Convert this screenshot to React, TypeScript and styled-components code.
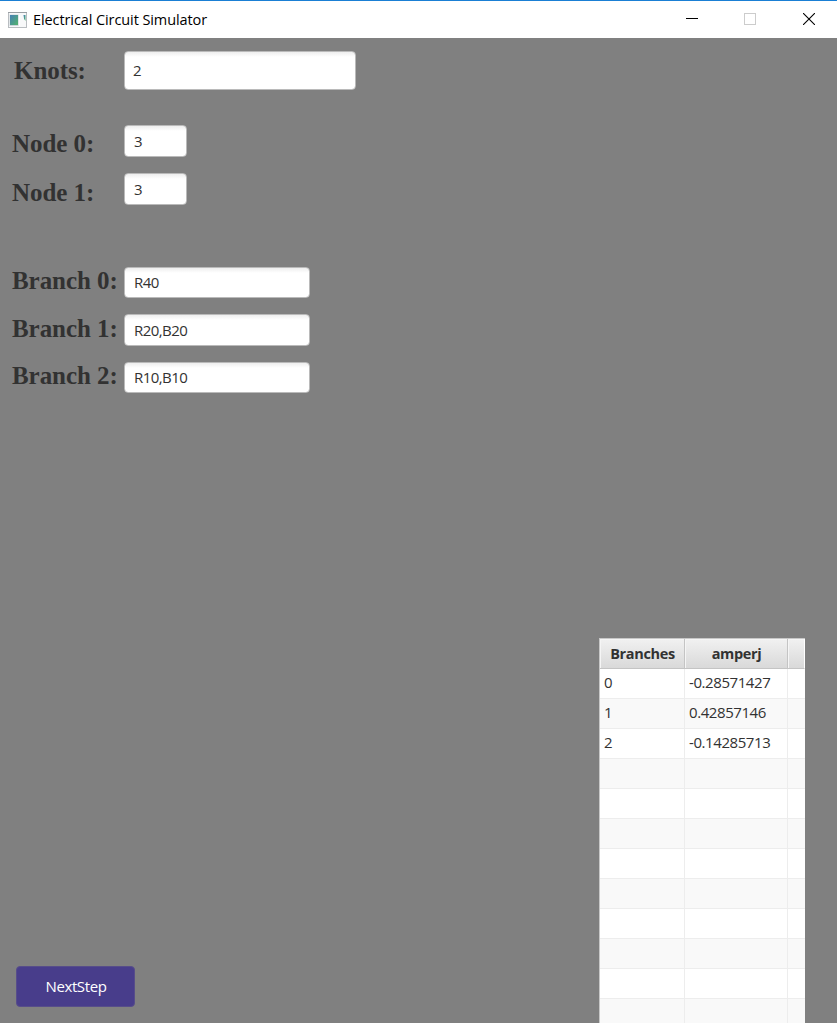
import React from "react";
import styled, { createGlobalStyle } from "styled-components";

const GlobalStyle = createGlobalStyle`
  *, *::before, *::after { box-sizing: border-box; }
  html, body { margin: 0; padding: 0; overflow: hidden; background: #808080; }
`;

const Window = styled.div`
  width: 837px;
  height: 1023px;
  display: flex;
  flex-direction: column;
  overflow: hidden;
  background: #808080;
  color: #323232;
  font-family: "Open Sans", "Noto Sans", sans-serif;
  font-size: 15px;
`;

const TitleBar = styled.header`
  flex: none;
  height: 38px;
  display: flex;
  align-items: center;
  padding-left: 8px;
  border-top: 1px solid #1a7fd4;
  background: #fff;
  color: #000;
`;

const Title = styled.span`
  flex: 1;
  margin-left: 6px;
  font-size: 14.5px;
  line-height: 20px;
  letter-spacing: -0.09px;
  white-space: nowrap;
`;

const Controls = styled.div`
  display: flex;
  margin-right: -1px;
  padding-bottom: 1px;
`;

const Control = styled.span`
  width: 58.5px;
  display: flex;
  justify-content: center;
  svg { display: block; }
`;

const Content = styled.main`
  flex: 1;
  min-height: 0;
  display: flex;
  justify-content: space-between;
  padding: 13px 32px 0 12px;
`;

const Side = styled.section`
  display: flex;
  flex-direction: column;
  justify-content: space-between;
  padding-bottom: 16px;
`;

const Group = styled.div<{ $gap: number }>`
  display: flex;
  flex-direction: column;
  gap: 16px;
  margin-bottom: ${(p) => p.$gap}px;
`;

const Row = styled.label<{ $h: number }>`
  display: flex;
  height: ${(p) => p.$h}px;
`;

const Label = styled.span<{ $inset?: number; $top: number }>`
  width: 112px;
  padding-left: ${(p) => p.$inset ?? 0}px;
  padding-top: ${(p) => p.$top}px;
  font: bold 25px/28px "Liberation Serif", "Times New Roman", serif;
  letter-spacing: -0.06px;
  white-space: nowrap;
`;

const Field = styled.input<{ $w: number; $pad: number; $lift?: number }>`
  width: ${(p) => p.$w}px;
  height: 100%;
  padding: 0 0 ${(p) => p.$lift ?? 0}px ${(p) => p.$pad}px;
  border: 1px solid #bababa;
  border-radius: 4px;
  outline: 0;
  background: linear-gradient(#eee 0, #fff 5px);
  color: #323232;
  font-family: inherit;
  font-size: 15px;
  letter-spacing: -0.55px;
`;

const NextButton = styled.button`
  width: 119px;
  height: 41px;
  margin-left: 4px;
  padding: 0 0 2px 1px;
  border: 1px solid #574d8a;
  border-radius: 4px;
  background: #483d8b;
  color: #fff;
  font-family: inherit;
  font-size: 15px;
  letter-spacing: -0.4px;
`;

const Table = styled.table`
  align-self: flex-start;
  width: 206px;
  margin-top: 587px;
  table-layout: fixed;
  border-collapse: separate;
  border-spacing: 0;
  border: solid #c8c8c8;
  border-width: 1px 0 0 1px;
  background: #fff;
`;

const HeadCell = styled.th`
  height: 30px;
  padding: 0 0 0 1px;
  border: solid #c4c4c4;
  border-width: 0 1px 1px 0;
  background: linear-gradient(#f1f1f1, #d9d9d9);
  box-shadow: inset 1px 1px 0 #f5f5f5;
  font-weight: bold;
  font-size: 14.5px;
  letter-spacing: -0.35px;
  &:last-child { border-right-color: #fff; }
`;

const BodyRow = styled.tr`
  background: #fff;
  &:nth-child(even) { background: #f9f9f9; }
`;

const Cell = styled.td`
  height: 30px;
  padding: 0 0 3px 4px;
  border: solid #ededed;
  border-width: 0 1px 1px 0;
  line-height: 20px;
  letter-spacing: -0.42px;
  &:last-child { border-right: 0; }
`;

const nodes = ["3", "3"];
const branches = ["R40", "R20,B20", "R10,B10"];
const currents = ["-0.28571427", "0.42857146", "-0.14285713"];

const AppIcon = () => (
  <svg width="19" height="16" viewBox="0 0 19 16">
    <defs>
      <linearGradient id="pane" x1="0" y1="0" x2="1" y2="1">
        <stop offset="0" stopColor="#4580b5" />
        <stop offset="1" stopColor="#52b36c" />
      </linearGradient>
    </defs>
    <rect x="0.5" y="0.5" width="18" height="15" fill="#f7f8f9" stroke="#b9bdc1" />
    <path d="M0 0.5H19" stroke="#9a9fa4" />
    <rect x="1.5" y="2.5" width="9" height="11.5" fill="#cdd6db" />
    <rect x="2" y="3" width="8" height="10" fill="url(#pane)" />
    <path d="M11.5 3V14" stroke="#fff" />
    <path d="M15.5 3H17.5V9Q15.5 7 15.5 3Z" fill="url(#pane)" />
  </svg>
);

export default function App() {
  return (
    <Window>
      <GlobalStyle />
      <TitleBar>
        <AppIcon />
        <Title>Electrical Circuit Simulator</Title>
        <Controls>
          <Control>
            <svg width="12" height="12"><path d="M0 5.5H12" stroke="#000" /></svg>
          </Control>
          <Control>
            <svg width="12" height="12"><rect x="0.5" y="0.5" width="11" height="11" fill="none" stroke="#ccc" /></svg>
          </Control>
          <Control>
            <svg width="12" height="12"><path d="M0 0L12 12M12 0L0 12" stroke="#000" strokeWidth="1.1" /></svg>
          </Control>
        </Controls>
      </TitleBar>
      <Content>
        <Side>
          <div>
            <Group $gap={35}>
              <Row $h={39}>
                <Label $inset={2} $top={6}>Knots:</Label>
                <Field $w={232} $pad={8} $lift={2} defaultValue="2" />
              </Row>
            </Group>
            <Group $gap={61.5}>
              {nodes.map((v, i) => (
                <Row key={i} $h={32}>
                  <Label $top={5 + i}>Node {i}:</Label>
                  <Field $w={63} $pad={9} $lift={1} defaultValue={v} />
                </Row>
              ))}
            </Group>
            <Group $gap={0}>
              {branches.map((v, i) => (
                <Row key={i} $h={31.5}>
                  <Label $top={i === 1 ? 0.5 : 0}>Branch {i}:</Label>
                  <Field $w={186} $pad={9} defaultValue={v} />
                </Row>
              ))}
            </Group>
          </div>
          <NextButton>NextStep</NextButton>
        </Side>
        <Table>
          <colgroup>
            <col style={{ width: 85 }} />
            <col style={{ width: 103 }} />
            <col />
          </colgroup>
          <thead>
            <tr>
              <HeadCell>Branches</HeadCell>
              <HeadCell>amperj</HeadCell>
              <HeadCell />
            </tr>
          </thead>
          <tbody>
            {Array.from({ length: 12 }, (_, i) => (
              <BodyRow key={i}>
                <Cell>{i < currents.length ? i : ""}</Cell>
                <Cell>{currents[i]}</Cell>
                <Cell />
              </BodyRow>
            ))}
          </tbody>
        </Table>
      </Content>
    </Window>
  );
}
